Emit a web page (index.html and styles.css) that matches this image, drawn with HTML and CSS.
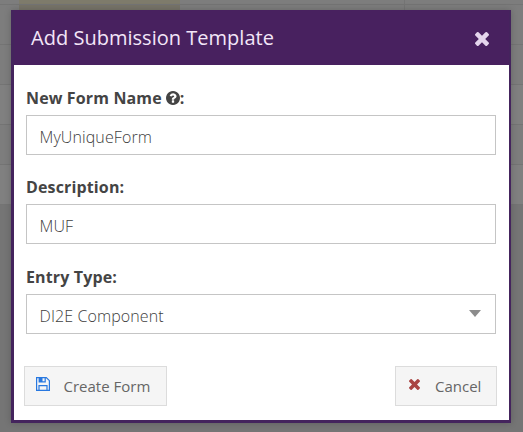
FILE: index.html
```html
<!DOCTYPE html>
<html lang="en">
<head>
<meta charset="utf-8">
<title>Add Submission Template</title>
<link rel="stylesheet" href="styles.css">
</head>
<body>
<div class="backdrop">
  <div class="row first"><span class="gutter"></span><span class="highlight"></span><span class="column"></span></div>
  <div class="row second"><span class="gutter"></span><span class="shade"></span><span class="column"></span></div>
  <div class="row"></div>
  <div class="row light"></div>
  <div class="row"></div>
  <div class="row light"></div>
</div>
<section class="modal">
  <header class="header">
    <h1 class="title">Add Submission Template</h1>
    <svg class="close" viewBox="302 302 1188 1188"><path d="M1490 1322q0 40-28 68l-136 136q-28 28-68 28t-68-28l-294-294-294 294q-28 28-68 28t-68-28l-136-136q-28-28-28-68t28-68l294-294-294-294q-28-28-28-68t28-68l136-136q28-28 68-28t68 28l294 294 294-294q28-28 68-28t68 28l136 136q28 28 28 68t-28 68l-294 294 294 294q28 28 28 68z" transform="translate(0 -64)"/></svg>
  </header>
  <form class="form">
    <div class="field">
      <label class="label name">New Form Name<svg class="help" viewBox="128 128 1536 1536"><path d="M1024 1376v-192q0-14-9-23t-23-9h-192q-14 0-23 9t-9 23v192q0 14 9 23t23 9h192q14 0 23-9t9-23zm256-672q0-88-55.500-163t-138.500-116-170-41q-243 0-371 213-15 24 8 42l132 100q7 6 19 6 16 0 25-12 53-68 86-92 34-24 86-24 48 0 85.500 26t37.500 59q0 38-20 61t-68 45q-63 28-115.500 86.500t-52.500 125.500v36q0 14 9 23t23 9h192q14 0 23-9t9-23q0-19 21.500-49.500t54.500-49.500q32-18 49-28.500t46-35 44.500-48 28-60.500 12.500-81zm384 192q0 209-103 385.500t-279.500 279.500-385.500 103-385.500-103-279.500-279.500-103-385.500 103-385.500 279.500-279.500 385.500-103 385.500 103 279.500 279.500 103 385.500z"/></svg>:</label>
      <div class="input">MyUniqueForm</div>
    </div>
    <div class="field">
      <label class="label desc">Description:</label>
      <div class="input">MUF</div>
    </div>
    <div class="field">
      <label class="label entry">Entry Type:</label>
      <div class="input select">DI2E Component<svg class="caret" viewBox="0 0 12 7"><path d="M0 0h12L6 7z"/></svg></div>
    </div>
    <footer class="actions">
      <button class="button create" type="button"><svg class="save" viewBox="0 0 14 14"><path d="M.6.6h9.700l3.100 3.100v9.700H.6z M3 13.400V8.600h8v4.800 M3.200.6v4.300h6V.6" fill="none" stroke="currentColor" stroke-width="1.200"/><path d="M3 1h3.500v4H3z" fill="currentColor"/></svg><span>Create Form</span></button>
      <button class="button cancel" type="button"><svg class="cross" viewBox="302 302 1188 1188"><path d="M1490 1322q0 40-28 68l-136 136q-28 28-68 28t-68-28l-294-294-294 294q-28 28-68 28t-68-28l-136-136q-28-28-28-68t28-68l294-294-294-294q-28-28-28-68t28-68l136-136q28-28 68-28t68 28l294 294 294-294q28-28 68-28t68 28l136 136q28 28 28 68t-28 68l-294 294 294 294q28 28 28 68z" transform="translate(0 -64)"/></svg><span>Cancel</span></button>
    </footer>
  </form>
</section>
</body>
</html>
```
FILE: styles.css
```css
* { box-sizing: border-box; }
body {
  margin: 0;
  width: 523px;
  height: 432px;
  overflow: hidden;
  background: #757575;
  font-family: "Open Sans", "Noto Sans", sans-serif;
  display: grid;
}
svg { display: block; flex: none; fill: currentColor; }
.backdrop, .modal { grid-area: 1 / 1; }
.row {
  display: flex;
  height: 40px;
  background: #7d7d7d;
  border-bottom: 1px solid #747474;
}
.row.light { background: #808080; }
.row.first { height: 5px; }
.gutter { width: 19px; }
.highlight { width: 161px; background: #7e7b6b; }
.shade { width: 161px; background: #777469; }
.column { width: 225px; border-right: 1px solid #747474; }

.modal {
  width: 500px;
  height: 413px;
  margin: 10px 0 0 11px;
  background: #fff;
  border: solid #44245d;
  border-width: 0 2px 3px 3px;
  box-shadow: 0 0 7px rgba(0, 0, 0, .2);
}
.header {
  display: flex;
  align-items: center;
  justify-content: space-between;
  height: 55px;
  padding: 0 20.5px 0 17px;
  background: #48215f;
}
.title {
  margin: 0;
  font-size: 20px;
  font-weight: 400;
  line-height: 28px;
  letter-spacing: .02px;
  color: #f3e6f8;
}
.close { width: 14px; height: 14px; margin-top: 2px; color: #e4d5ec; overflow: visible; }

.form { padding: 20px 12px 0; }
.field { height: 89px; width: 470px; }
.field:nth-child(2) { height: 90px; }
.label {
  display: flex;
  align-items: center;
  height: 30px;
  padding-bottom: 4px;
  font-size: 16px;
  font-weight: 700;
  letter-spacing: .14px;
  white-space: pre;
  color: #444;
}
.help { width: 14px; height: 14px; margin-left: 4px; }
.input {
  display: flex;
  align-items: center;
  height: 40px;
  padding: 4px 14px 0 12.500px;
  border: 1px solid #c5c5c5;
  font-size: 16px;
  font-weight: 300;
  letter-spacing: .1px;
  color: #404040;
}
.select { justify-content: space-between; }
.caret { width: 12px; height: 7px; margin-top: -5px; color: #8c8c8c; }

.actions {
  display: flex;
  justify-content: space-between;
  width: 473px;
  margin: 13px 0 0 -2px;
}
.button {
  display: flex;
  align-items: center;
  height: 40px;
  padding: 0;
  border: 1px solid #dcdcdc;
  background: #f5f5f5;
  font: 400 15px "Open Sans", "Noto Sans", sans-serif;
  color: #666;
}
.create { width: 143px; padding-left: 11px; }
.cancel { width: 102px; padding-left: 13px; }
.save { width: 14px; height: 14px; margin: -4px 13.500px 0 0; color: #2878e0; }
.cross { width: 11px; height: 11px; margin: -3px 15px 0 0; color: #a94442; overflow: visible; }
```
